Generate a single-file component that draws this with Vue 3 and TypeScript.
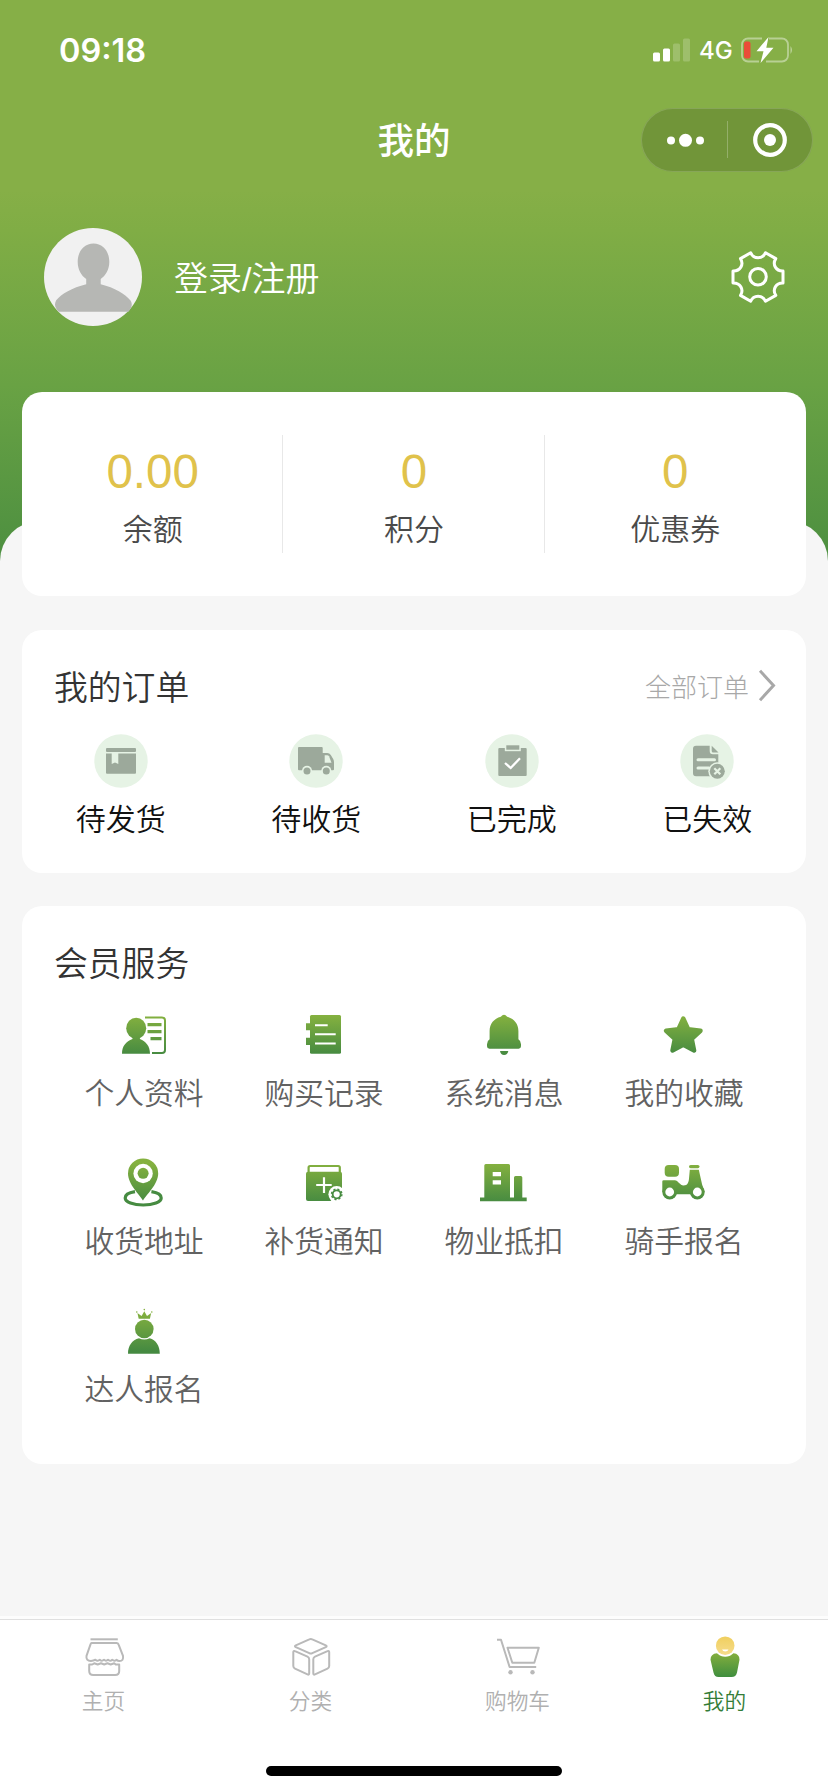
<script setup lang="ts">
interface Stat {
  value: string
  label: string
}
interface Entry {
  id: string
  label: string
}

const stats: Stat[] = [
  { value: '0.00', label: '余额' },
  { value: '0', label: '积分' },
  { value: '0', label: '优惠券' },
]

const orders: Entry[] = [
  { id: 'pending', label: '待发货' },
  { id: 'shipping', label: '待收货' },
  { id: 'done', label: '已完成' },
  { id: 'invalid', label: '已失效' },
]

const services: Entry[] = [
  { id: 'profile', label: '个人资料' },
  { id: 'records', label: '购买记录' },
  { id: 'messages', label: '系统消息' },
  { id: 'favorites', label: '我的收藏' },
  { id: 'address', label: '收货地址' },
  { id: 'restock', label: '补货通知' },
  { id: 'property', label: '物业抵扣' },
  { id: 'rider', label: '骑手报名' },
  { id: 'talent', label: '达人报名' },
]

const tabs: Entry[] = [
  { id: 'home', label: '主页' },
  { id: 'category', label: '分类' },
  { id: 'cart', label: '购物车' },
  { id: 'mine', label: '我的' },
]
const activeTab = 'mine'
</script>

<template>
  <div class="page">
    <div class="status">
      <span class="time">09:18</span>
      <div class="indicators">
        <svg class="signal" width="38" height="24" viewBox="0 0 38 24" fill="#fff">
          <rect x="0" y="14.500" width="7" height="9" rx="1.500" />
          <rect x="10" y="10.500" width="7" height="13" rx="1.500" />
          <rect x="20" y="5.500" width="7" height="18" rx="1.500" opacity=".2" />
          <rect x="30" y="0.500" width="7" height="23" rx="1.500" opacity=".2" />
        </svg>
        <span class="network">4G</span>
        <svg width="54" height="28" viewBox="0 0 54 28">
          <path d="M22 2.500H8a6 6 0 0 0-6 6v11a6 6 0 0 0 6 6h11M29 2.500h13a6 6 0 0 1 6 6v11a6 6 0 0 1-6 6H26" fill="none" stroke="#fff" stroke-opacity=".42" stroke-width="1.800" />
          <path d="M50.500 10q3 4 0 8z" fill="#fff" opacity=".45" />
          <rect x="4" y="5.500" width="6.500" height="17" rx="2" fill="#ea4c38" />
          <path d="M28.500 1 16.500 15.200h7L20.500 27 33.500 11.700h-7.200z" fill="#fff" />
        </svg>
      </div>
    </div>

    <div class="nav">
      <h1 class="nav-title">我的</h1>
      <div class="capsule">
        <svg width="172" height="64" viewBox="0 0 172 64">
          <g fill="#fff">
            <circle cx="30" cy="32.500" r="4" />
            <circle cx="44.500" cy="32.300" r="6.500" />
            <circle cx="59" cy="32.500" r="4" />
            <circle cx="129" cy="32" r="6" />
          </g>
          <path d="M86.500 13v37" stroke="#fff" stroke-opacity=".25" stroke-width="1" />
          <circle cx="129" cy="32" r="14.800" fill="none" stroke="#fff" stroke-width="4.200" />
        </svg>
      </div>
    </div>

    <div class="user">
      <svg class="avatar" width="98" height="98" viewBox="0 0 98 98">
        <circle cx="49" cy="49" r="49" fill="#f1f1f1" />
        <path d="M49.500 15.600c9.500 0 15.800 7.800 15.800 18.400 0 7.500-3.600 13.400-8.600 17v5.200c14 3.500 24.500 9.500 30 16.500 2 3.500 1.300 7-2.200 11H14.800c-4-4-4.800-7.500-2.600-11.500C17.500 66 28 59.500 42.200 56.200V51c-5-3.600-8.500-9.500-8.500-17 0-10.600 6.300-18.400 15.800-18.400z" fill="#b6b7b4" />
      </svg>
      <span class="login">登录/注册</span>
      <svg class="gear" width="56" height="56" viewBox="0 0 56 56" fill="none" stroke="#fff" stroke-width="3" stroke-linejoin="round">
        <path d="M20.700 3.700C23.500 10.500 32.500 10.500 35.500 3.700L45.800 9.600C42 15.500 46 22.300 53 22V34C46 33.700 42 40.500 45.800 46.400L35.500 52.300C32.500 45.500 23.500 45.500 20.700 52.300L10.500 46.400C14.200 40.500 10.200 33.700 3 34V22C10.200 22.300 14.200 15.500 10.500 9.600Z" />
        <circle cx="28" cy="27.800" r="8.300" />
      </svg>
    </div>

    <main class="sheet">
      <section class="card stats">
        <div v-for="s in stats" :key="s.label" class="stat">
          <span class="stat-value">{{ s.value }}</span>
          <span class="stat-label">{{ s.label }}</span>
        </div>
      </section>

      <section class="card orders">
        <div class="card-head">
          <h2>我的订单</h2>
          <span class="more">
            全部订单
            <svg class="chevron" width="18" height="34" viewBox="0 0 18 34" fill="none" stroke="#a8a8a8" stroke-width="3">
              <path d="M2 1.800 15.500 16.500 2 31.200" />
            </svg>
          </span>
        </div>
        <div class="order-row">
          <div v-for="o in orders" :key="o.id" class="order">
            <svg width="54" height="54" viewBox="-.5 -.5 54 54" fill="#9ca99b">
              <circle cx="26.500" cy="26.500" r="26.700" fill="#e6f3e5" />
              <template v-if="o.id === 'pending'">
                <rect x="11.500" y="13.500" width="30" height="4" rx="1" />
                <path d="M11.500 19h30v19.200a1 1 0 0 1-1 1h-28a1 1 0 0 1-1-1z" />
                <path d="M17.200 18.500h6.600v11l-3.300-1.500-3.300 1.500z" fill="#e6f3e5" />
              </template>
              <template v-else-if="o.id === 'shipping'">
                <path d="M9.500 12.500h22.700a1 1 0 0 1 1 1v5h4.500q2.300 0 3.600 2l2.400 4q.8 1.400.8 3v7.300a1 1 0 0 1-1 1h-34a1 1 0 0 1-1-1V13.500a1 1 0 0 1 1-1z" />
                <path d="M35.200 20.800h2.500q1.200 0 1.800 1l2.500 6.400h-6.800z" fill="#e6f3e5" />
                <circle cx="17.500" cy="36.300" r="5" fill="#e6f3e5" />
                <circle cx="36.800" cy="36.300" r="5" fill="#e6f3e5" />
                <circle cx="17.500" cy="36.500" r="3.500" />
                <circle cx="36.800" cy="36.500" r="3.500" />
              </template>
              <template v-else-if="o.id === 'done'">
                <rect x="12.800" y="13.500" width="28.400" height="28" rx="1" />
                <path d="M19.300 10h16v6.700h-16z" fill="#e6f3e5" />
                <rect x="20.800" y="10.800" width="13" height="4.400" />
                <path d="m19.500 28.500 5.700 5 9.300-9.800" fill="none" stroke="#fff" stroke-width="2.300" />
              </template>
              <template v-else>
                <path d="M15.500 11.200h13.700v5.300q0 3.300 3.300 3.300h5.300v19q0 3-3 3H15.500q-3 0-3-3V14.200q0-3 3-3z" />
                <path d="M31.200 11.200 38 18h-5.300q-1.500 0-1.500-1.500z" />
                <path d="M17.500 25.200h16.500M17.500 33.500h11" stroke="#e6f3e5" stroke-width="3" stroke-linecap="round" />
                <circle cx="36.800" cy="36.800" r="9" fill="#e6f3e5" />
                <circle cx="36.800" cy="36.800" r="7.500" />
                <path d="m33.800 33.800 6 6m0-6-6 6" stroke="#e6f3e5" stroke-width="2.200" />
              </template>
            </svg>
            <span>{{ o.label }}</span>
          </div>
        </div>
      </section>

      <section class="card services">
        <h2>会员服务</h2>
        <svg class="defs" width="0" height="0" aria-hidden="true">
          <defs>
            <linearGradient id="leaf" gradientUnits="userSpaceOnUse" x1="0" y1="4" x2="0" y2="44">
              <stop offset="0" stop-color="#85b13f" />
              <stop offset="1" stop-color="#458a41" />
            </linearGradient>
            <linearGradient id="sun" x1="0" y1="0" x2="0" y2="1">
              <stop offset="0" stop-color="#f0cf5e" />
              <stop offset="1" stop-color="#f6dc8c" />
            </linearGradient>
            <linearGradient id="torso" x1="0" y1="0" x2="0" y2="1">
              <stop offset="0" stop-color="#83ae3d" />
              <stop offset="1" stop-color="#3f8e3e" />
            </linearGradient>
          </defs>
        </svg>
        <div class="service-grid">
          <div v-for="s in services" :key="s.id" class="service">
            <svg width="48" height="48" viewBox="0 0 48 48" fill="url(#leaf)">
              <template v-if="s.id === 'profile'">
                <ellipse cx="16.200" cy="17.300" rx="10" ry="10.600" />
                <path d="M2 42.700C2 35 6 30.500 12.500 28V25h7.400v3C26 30.500 30 35 30 42.700z" />
                <path d="M25 6.500H42q3 0 3 3V39q0 3-3 3H32" fill="none" stroke="url(#leaf)" stroke-width="2" />
                <path d="M27.500 12h14v3.200h-14zM27.500 19.100h14v3.200h-14zM30.500 26h11v3.200h-11z" />
              </template>
              <template v-else-if="s.id === 'records'">
                <rect x="10" y="4" width="31" height="38.700" rx="1.500" />
                <path d="M6 12.300h5v7H6zM6 26.700h5v7.300H6z" />
                <path d="M15 14.300h12.700M15 23.300h20.700M15 32.500h20.700" stroke="#fff" stroke-width="2" />
              </template>
              <template v-else-if="s.id === 'messages'">
                <path d="M20.800 5.800Q24 1.500 27.200 5.800C34 7.500 38.400 13 38.400 20v8.300q2.600 1.500 2.600 5v2q0 2.400-2.400 2.400H9.400Q7 37.700 7 35.300v-2q0-3.500 2.600-5V20C9.600 13 14 7.500 20.800 5.800z" />
                <path d="M20 40h8.300q-.8 4-4.200 4T20 40z" />
              </template>
              <template v-else-if="s.id === 'favorites'">
                <path d="m23.300 7.500 4.900 10.700 12.300 1.600-8.700 8.200 2.300 11.500-10.800-5.700-10.800 5.700L14.800 28l-8.700-8.200 12.300-1.600z" stroke="url(#leaf)" stroke-width="4.400" stroke-linejoin="round" />
              </template>
              <template v-else-if="s.id === 'address'">
                <path d="M15 32.700C8.500 33.700 5.200 36 5.200 39c0 4 8 7 18 7s18-3 18-7c0-3-3.300-5.300-9.800-6.300" fill="none" stroke="#468b41" stroke-width="3.200" />
                <path d="M23 41.500C20 36 8 25.500 8 14.500a15 15 0 0 1 30.200 0C38.200 25.500 26 36 23 41.500z" />
                <circle cx="23.100" cy="14.500" r="9.700" fill="#fff" />
                <circle cx="23.100" cy="14.300" r="5.500" />
              </template>
              <template v-else-if="s.id === 'restock'">
                <path d="M8.600 14V8.500Q8.600 7 10.100 7H38.300q1.500 0 1.500 1.500V14" fill="none" stroke="url(#leaf)" stroke-width="2.200" />
                <rect x="6" y="12.700" width="36" height="29.300" rx="2" />
                <path d="M24 18.300V34M16.200 26H31.700" stroke="#fff" stroke-width="2.200" />
                <circle cx="36.700" cy="35.300" r="8.300" fill="#fff" />
                <circle cx="36.700" cy="35.300" r="4" fill="none" stroke="#478c41" stroke-width="1.800" />
                <circle cx="36.700" cy="35.300" r="5.200" fill="none" stroke="#478c41" stroke-width="1.400" stroke-dasharray="2.100 1.984" />
              </template>
              <template v-else-if="s.id === 'property'">
                <path d="M0 38.500h4.300V6.500Q4.300 5 5.800 5h22.700Q30 5 30 6.500v32h4V18.500q0-1.500 1.500-1.500h5.300q1.500 0 1.500 1.500v20h4.400v3.800H0z" />
                <path d="M12.700 13H21v4.200h-8.300zM12.700 21.300H21v4.200h-8.300z" fill="#fff" />
              </template>
              <template v-else-if="s.id === 'rider'">
                <rect x="4.700" y="6" width="14.300" height="11.700" rx="4" />
                <rect x="29" y="6" width="10.500" height="3.200" rx="1.600" />
                <path d="M2.300 33V22.500q0-1.300 1.300-1.300h11.200c3.200 0 5.200 5.300 8.700 5.300 4.300 0 5.300-3.500 5.600-8l.7-7.700h9l3.300 14.700L44.700 33l-7 2.200H9.700z" />
                <circle cx="9.700" cy="33" r="7.400" />
                <circle cx="37.300" cy="33" r="7.400" />
                <circle cx="9.700" cy="33" r="4.400" fill="#fff" />
                <circle cx="37.300" cy="33" r="4.400" fill="#fff" />
              </template>
              <template v-else>
                <path d="M18.700 11.800 17.400 6l4.200 3 2.700-4.800L27 9l4.200-3-1.300 5.800z" />
                <circle cx="16.800" cy="5" r=".8" />
                <circle cx="24.300" cy="2.600" r=".8" />
                <circle cx="31.800" cy="5" r=".8" />
                <circle cx="24.300" cy="22" r="9.300" />
                <path d="M8 46.700C8 39 12 33 19 31.300q5.300 2.400 10.600 0C36 33 39.800 39 39.800 46.700z" />
              </template>
            </svg>
            <span>{{ s.label }}</span>
          </div>
        </div>
      </section>
    </main>

    <nav class="tabbar">
      <div v-for="t in tabs" :key="t.id" class="tab" :class="{ active: t.id === activeTab }">
        <svg width="48" height="48" viewBox="0 0 48 48" fill="none" stroke="#b9b9b9" stroke-width="2" stroke-linejoin="round">
          <template v-if="t.id === 'home'">
            <path d="M10.500 7.300h27.300" />
            <path d="M11.500 11h25q1.500 0 2 1.400l4.500 11.400q.8 5.200-3.500 5.200-1.700 0-3-1.300-2.200 2.300-4.300 0-2.200 2.300-4.200 0-2 2.300-4 0-2 2.300-4.200 0-2.100 2.300-4.300 0-2.200 1.300-4.500 1.300-5.300 0-4.500-5.200l4-11.400q.5-1.400 1-1.400z" />
            <path d="M9.200 32.500h3l2-1.200 3.500 1.200 3.300-1.200 3.200 1.200 3.200-1.200 3.300 1.200 3.500-1.200 1.500 1.200h3.500V39q0 4-4 4H13.200q-4 0-4-4z" />
          </template>
          <template v-else-if="t.id === 'category'">
            <path d="M22.300 7.300q1.500-.8 3 0l13.500 6q1.700.9 0 1.800l-13.500 6q-1.500.8-3 0l-13.500-6q-1.700-.9 0-1.800z" />
            <path d="M6.300 20.200q0-1.800 1.700-1l12.500 5.500q1.700.8 1.700 2.500v14q0 2-1.700 1.200L8 36.600q-1.700-.8-1.700-2.500z" />
            <path d="M42.200 20.200q0-1.800-1.700-1L28 24.700q-1.700.8-1.700 2.500v14q0 2 1.700 1.200l12.500-5.800q1.700-.8 1.700-2.500z" />
          </template>
          <template v-else-if="t.id === 'cart'">
            <path d="M3 7.800h4l8.600 27.200h26.600" />
            <path d="M13.500 15.800h31.300l-4.500 14.900H18.300z" />
            <circle cx="16.500" cy="40.300" r="2.200" fill="#b9b9b9" stroke="none" />
            <circle cx="38.500" cy="40.300" r="2.200" fill="#b9b9b9" stroke="none" />
          </template>
          <template v-else>
            <path d="M16 21.300h16.500q6 .5 6 6.500L36 40.500Q35 45 30.500 45h-13Q13.500 45 12.500 40.500L9.500 27.800q0-6 6.500-6.500z" fill="url(#torso)" stroke="none" />
            <circle cx="24.200" cy="13.700" r="11" fill="#fff" stroke="none" />
            <circle cx="24.200" cy="13.700" r="9.300" fill="url(#sun)" stroke="none" />
            <path d="M21 17.600h6.500q-.8 2-3.200 2T21 17.600z" fill="#fff" stroke="none" />
          </template>
        </svg>
        <span>{{ t.label }}</span>
      </div>
    </nav>
    <div class="home-area"><div class="home-indicator"></div></div>
  </div>
</template>

<style>
body {
  background: #fff;
}
</style>

<style scoped>
.page {
  width: 828px;
  height: 1792px;
  display: flex;
  flex-direction: column;
  overflow: hidden;
  font-family: "Liberation Sans", "Noto Sans CJK SC", sans-serif;
  font-weight: 350;
  background: linear-gradient(#86af47 0, #86af47 190px, #80ad45 230px, #69a244 385px, #4b8e40 570px);
}
.page svg {
  display: block;
  flex: none;
  overflow: visible;
}
h1,
h2 {
  margin: 0;
  font-weight: 350;
}
.status {
  height: 100px;
  padding: 0 34px 0 59px;
  display: flex;
  align-items: center;
  justify-content: space-between;
  color: #fff;
  font-family: Inter, sans-serif;
}
.time {
  margin-top: 1px;
  font-size: 32.500px;
  font-weight: 600;
  line-height: 40px;
}
.indicators {
  display: flex;
  align-items: center;
}
.network {
  margin: 2px 8px 0 8px;
  font-size: 24px;
  font-weight: 450;
  line-height: 30px;
  width: 33px;
}
.nav {
  height: 80px;
  padding-right: 15px;
  display: grid;
  grid-template-columns: 1fr auto;
  align-items: center;
}
.nav-title {
  padding: 3px 0 0 187px;
  text-align: center;
  color: #fff;
  font-size: 36.500px;
  font-weight: 500;
  line-height: 52px;
}
.capsule {
  width: 172px;
  height: 64px;
  border-radius: 32px;
  background: #719539;
  box-shadow: inset 0 0 0 1px rgba(255, 255, 255, 0.16);
}
.user {
  height: 212px;
  box-sizing: border-box;
  padding: 48px 42px 0 44px;
  display: flex;
  align-items: flex-start;
}
.login {
  margin: 27px auto 0 32px;
  color: #fff;
  font-size: 34px;
  line-height: 48px;
}
.gear {
  margin-top: 21px;
}
.sheet {
  flex: 1;
  margin-top: 129px;
  padding: 0 22px;
  display: flex;
  flex-direction: column;
  background: #f6f6f6;
  border-radius: 40px 40px 0 0;
}
.card {
  box-sizing: border-box;
  background: #fff;
  border-radius: 20px;
}
.stats {
  height: 204px;
  margin-top: -129px;
  display: grid;
  grid-template-columns: repeat(3, 1fr);
  align-items: start;
  padding-top: 43px;
}
.stat {
  height: 118px;
  display: flex;
  flex-direction: column;
  align-items: center;
}
.stat + .stat {
  box-shadow: -1px 0 0 #e8e8e8;
}
.stat-value {
  margin-top: 9px;
  font-size: 47.500px;
  line-height: 56px;
  color: #e0c24b;
}
.stat-label {
  margin-top: 8px;
  font-size: 30px;
  line-height: 44px;
  color: #4a4a4a;
}
.orders {
  height: 243px;
  margin-top: 34px;
  padding-top: 34px;
}
.card-head {
  height: 48px;
  padding: 0 30px 0 32px;
  display: flex;
  align-items: center;
  justify-content: space-between;
}
h2 {
  font-size: 33.800px;
  line-height: 48px;
  color: #333;
}
.more {
  display: flex;
  align-items: center;
  gap: 9px;
  font-size: 26px;
  font-weight: 300;
  line-height: 38px;
  color: #a8a8a8;
}
.chevron {
  margin-top: -5px;
}
.order-row {
  margin: 22px 1px 0;
  display: grid;
  grid-template-columns: repeat(4, 1fr);
}
.order {
  display: flex;
  flex-direction: column;
  align-items: center;
  gap: 10px;
  font-size: 30px;
  line-height: 44px;
  color: #111;
}
.services {
  height: 558px;
  margin-top: 33px;
  padding: 34px 32px 0;
}
.defs {
  height: 0;
}
.service-grid {
  margin-top: 23px;
  display: grid;
  grid-template-columns: repeat(4, 180px);
  grid-auto-rows: 148px;
}
.service {
  display: flex;
  flex-direction: column;
  align-items: center;
  gap: 13px;
  font-size: 29.800px;
  line-height: 44px;
  color: #626262;
}
.tabbar {
  flex: none;
  height: 131px;
  box-sizing: border-box;
  border-top: 3px solid #fdfdfd;
  box-shadow: inset 0 1px 0 #e0e0e0;
  padding-top: 13px;
  display: grid;
  grid-template-columns: repeat(4, 1fr);
  background: #fff;
}
.tab {
  display: flex;
  flex-direction: column;
  align-items: center;
  gap: 6px;
  font-size: 21.700px;
  line-height: 32px;
  color: #b0b0b0;
}
.tab.active {
  color: #347d38;
}
.home-area {
  flex: none;
  height: 45px;
  background: #fff;
  display: flex;
  justify-content: center;
  align-items: flex-start;
}
.home-indicator {
  width: 296px;
  height: 10px;
  margin-top: 19px;
  border-radius: 5px;
  background: #000;
}
</style>
